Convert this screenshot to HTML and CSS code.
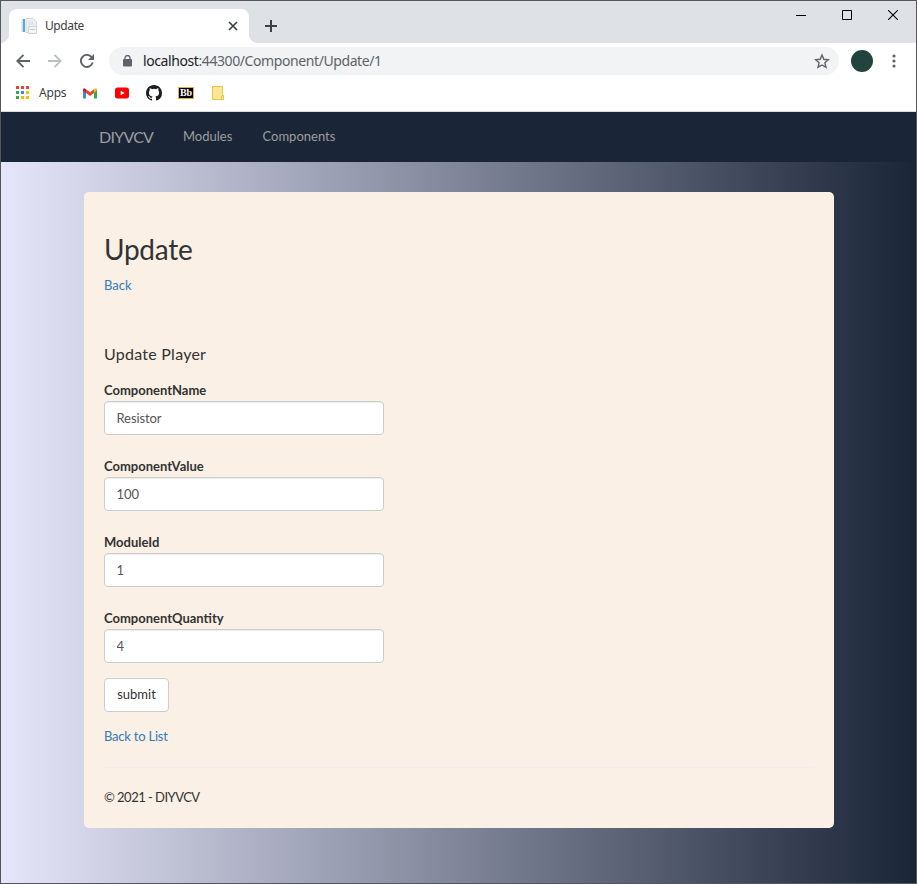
FILE: index.html
```html
<!DOCTYPE html>
<html lang="en">
<head>
<meta charset="utf-8">
<title>Update</title>
<link rel="stylesheet" href="styles.css">
</head>
<body>
<div class="window">
  <header class="tabstrip">
    <div class="tab">
      <svg class="favicon" width="16" height="16" viewBox="0 0 16 16"><path d="M5 .5h7l3.500 3v11H5z" fill="#eef2f6" stroke="#d3d7db"/><path d="M.5 1h3v13h-3z" fill="#c3e0f1"/><path d="M2 1h2v13H2z" fill="#5fa6d0"/><path d="M7 4h5M7 6h6" stroke="#d0dce5"/><path d="M7.500 8.500h8v7h-8z" fill="#f4f5f6" stroke="#cdd0d4"/><path d="M9 11.500h5" stroke="#c3c8cd"/></svg>
      <span class="tab-title">Update</span>
      <svg class="tab-close" width="10" height="10" viewBox="0 0 10 10"><path d="M1 1l8 8M9 1L1 9" stroke="#3c4043" stroke-width="1.700"/></svg>
    </div>
    <svg class="new-tab" width="12" height="12" viewBox="0 0 12 12"><path d="M6 0v12M0 6h12" stroke="#3c4043" stroke-width="2"/></svg>
    <div class="controls">
      <svg width="10" height="10" viewBox="0 0 10 10"><path d="M0 5.500h10" stroke="#000"/></svg>
      <svg width="10" height="10" viewBox="0 0 10 10"><path d="M.5.5h9v9h-9z" fill="none" stroke="#000"/></svg>
      <svg width="10" height="10" viewBox="0 0 10 10"><path d="M0 0l10 10M10 0L0 10" stroke="#000" stroke-width="1.100"/></svg>
    </div>
  </header>
  <div class="toolbar">
    <svg class="nav-icon" width="14" height="14" viewBox="0 0 14 14"><path d="M14 7H1.500M7.500.8L1.300 7l6.200 6.200" fill="none" stroke="#5f6368" stroke-width="1.900"/></svg>
    <svg class="nav-icon" width="14" height="14" viewBox="0 0 14 14"><path d="M0 7h12.500M6.500.8L12.700 7l-6.200 6.200" fill="none" stroke="#bdbfc1" stroke-width="1.900"/></svg>
    <svg class="nav-icon" width="14" height="14" viewBox="0 0 14 14"><path d="M12.700 8.500A6 6 0 1 1 11.300 2.800l1.200 1.300" fill="none" stroke="#5f6368" stroke-width="1.900"/><path d="M14 0v6H8z" fill="#5f6368"/></svg>
    <div class="omnibox">
      <svg class="lock" width="9" height="12" viewBox="0 0 9 12"><path d="M2 5V3a2.500 2.500 0 0 1 5 0v2" fill="none" stroke="#5f6368" stroke-width="1.300"/><rect y="4" width="9" height="7.500" rx="1" fill="#5f6368"/></svg>
      <span class="url"><b>localhost</b>:44300/Component/Update/1</span>
      <svg class="star" width="16" height="16" viewBox="0 0 16 16"><path d="M8 2l1.800 4.300 4.700.4-3.600 3.100 1.100 4.600L8 12l-4 2.400 1.100-4.600-3.600-3.100 4.700-.4z" fill="none" stroke="#5f6368" stroke-width="1.400"/></svg>
    </div>
    <span class="avatar"></span>
    <svg class="more" width="4" height="14" viewBox="0 0 4 14" fill="#5f6368"><circle cx="2" cy="2" r="1.600"/><circle cx="2" cy="7" r="1.600"/><circle cx="2" cy="12" r="1.600"/></svg>
  </div>
  <div class="bookmarks">
    <svg class="apps" width="13" height="13" viewBox="0 0 13 13"><path d="M0 0h3v3H0zM5 0h3v3H5zM10 0h3v3h-3z" fill="#ea4335"/><path d="M0 5h3v3H0zM0 10h3v3H0z" fill="#34a853"/><path d="M5 5h3v3H5z" fill="#4285f4"/><path d="M10 5h3v3h-3zM5 10h3v3H5zM10 10h3v3h-3z" fill="#fbbc04"/></svg>
    <span class="apps-label">Apps</span>
    <svg width="16" height="16" viewBox="0 0 16 16"><path d="M1 4v9q0 .5.500.5h2.500V6z" fill="#4285f4"/><path d="M15 4v9q0 .5-.5.5H12V6z" fill="#34a853"/><path d="M12 4.500l1-1q2-1 2 1.500L12 8z" fill="#fbbc04"/><path d="M1 5q0-2.500 2-1.500L4 4.500V8L1 5.800z" fill="#c5221f"/><path d="M4 4.300L8 7.300l4-3V8l-4 3-4-3z" fill="#ea4335"/></svg>
    <svg width="16" height="16" viewBox="0 0 16 16"><rect x="1" y="2.500" width="14" height="11" rx="2.500" fill="#f00"/><path d="M6.700 5.700v4.600l4-2.300z" fill="#fff"/></svg>
    <svg width="16" height="16" viewBox="0 0 16 16"><path fill="#1b1f23" d="M8 0C3.580 0 0 3.580 0 8c0 3.540 2.290 6.530 5.470 7.590.4.070.55-.17.55-.38 0-.19-.01-.82-.01-1.490-2.010.37-2.530-.49-2.690-.94-.09-.23-.48-.94-.82-1.130-.28-.15-.68-.52-.01-.53.63-.01 1.080.58 1.230.82.72 1.210 1.870.87 2.330.66.07-.52.280-.87.510-1.070-1.780-.2-3.640-.89-3.640-3.950 0-.87.310-1.590.820-2.150-.08-.2-.36-1.020.080-2.120 0 0 .67-.21 2.200.820a7.500 7.500 0 0 1 4 0c1.530-1.040 2.200-.82 2.200-.82.440 1.100.160 1.920.080 2.120.510.560.820 1.270.820 2.150 0 3.070-1.870 3.750-3.650 3.950.290.250.540.730.540 1.480 0 1.070-.01 1.930-.01 2.200 0 .210.150.460.550.380A8.010 8.010 0 0 0 16 8c0-4.420-3.580-8-8-8z"/></svg>
    <span class="bb">Bb</span>
    <svg width="16" height="16" viewBox="0 0 16 16"><path d="M2.500 1.500h10v9h1v4h-11z" fill="#ffe694" stroke="#e8c44c"/><path d="M11.500 14.500v-4h2" fill="none" stroke="#e8c44c"/></svg>
  </div>
  <nav class="navbar">
    <a class="brand">DIYVCV</a>
    <a class="link-modules">Modules</a>
    <a class="link-components">Components</a>
  </nav>
  <main class="page">
    <section class="card">
      <h1>Update</h1>
      <a class="back">Back</a>
      <h2>Update Player</h2>
      <form>
        <label for="name">ComponentName</label>
        <input id="name" value="Resistor">
        <label for="value">ComponentValue</label>
        <input id="value" value="100">
        <label for="module">ModuleId</label>
        <input id="module" value="1">
        <label for="quantity">ComponentQuantity</label>
        <input id="quantity" value="4">
        <button type="button">submit</button>
      </form>
      <a class="list">Back to List</a>
      <hr>
      <footer>© 2021 - DIYVCV</footer>
    </section>
  </main>
</div>
</body>
</html>
```
FILE: styles.css
```css
* { box-sizing: border-box; }
body { margin: 0; font-family: Lato, "Liberation Sans", sans-serif; font-size: 13px; color: #333; }
svg { display: block; flex: none; }
.window { width: 917px; height: 884px; border: 1px solid #55565a; display: flex; flex-direction: column; overflow: hidden; background: #fff; }
.tabstrip { height: 42px; flex: none; background: #dee1e6; display: flex; align-items: flex-start; padding-left: 8px; font-family: "Noto Sans", sans-serif; }
.tab { position: relative; width: 240px; height: 34px; margin-top: 8px; padding: 0 11px 0 12px; background: #fff; border-radius: 8px 8px 0 0; display: flex; align-items: center; }
.tab::before, .tab::after { content: ""; position: absolute; bottom: 0; width: 8px; height: 8px; }
.tab::before { left: -8px; background: radial-gradient(circle at 0 0, transparent 7.5px, #fff 8px); }
.tab::after { right: -8px; background: radial-gradient(circle at 100% 0, transparent 7.5px, #fff 8px); }
.tab-title { margin: -2px 0 0 8px; font-size: 12px; letter-spacing: -.4px; color: #3c4043; }
.tab-close { margin-left: auto; }
.new-tab { margin: 19px 0 0 16px; }
.controls { display: flex; gap: 36px; margin: 9px 18px 0 auto; }
.toolbar { height: 36px; flex: none; display: flex; align-items: center; padding: 0 20px 0 15px; }
.nav-icon { margin-right: 18px; }
.omnibox { width: 730px; height: 28px; margin-left: -3px; border-radius: 14px; background: #f1f3f4; display: flex; align-items: center; padding: 0 9px 0 14px; }
.lock { margin-top: -1px; }
.url { margin: -1px 0 0 11px; font: 14px "Noto Sans", sans-serif; letter-spacing: -.41px; color: #5f6368; }
.url b { font-weight: 400; color: #202124; }
.star { margin-left: auto; }
.avatar { width: 22px; height: 22px; border-radius: 50%; background: #22443e; margin-left: 12px; }
.more { margin-left: auto; }
.bookmarks { height: 33px; flex: none; display: flex; align-items: center; gap: 16px; padding: 0 0 5px 15px; border-bottom: 1px solid #d8dadd; font-family: "Noto Sans", sans-serif; }
.apps-label { width: 27px; margin-left: -6px; font-size: 12px; letter-spacing: -.2px; color: #3c4043; }
.bb { width: 16px; height: 12px; background: #000; border: 1px solid #e5a84b; color: #fff; font: bold 10px/10px "Liberation Serif", serif; text-align: center; }
.navbar { height: 50px; flex: none; background: #1a2537; color: #9d9d9d; display: flex; align-items: center; padding: 0 0 2px 98px; }
.brand { width: 84px; font-size: 16px; letter-spacing: -.75px; }
.link-modules { width: 79.500px; }
.page { flex: 1; padding: 30px 0 0 83px; background: linear-gradient(to right, #e6e6fa, #1a2537); }
.card { width: 750px; height: 636px; padding: 38px 20px 0; background: #faf0e6; border-radius: 5px; display: flex; flex-direction: column; }
h1 { margin: 0; font-size: 28px; line-height: 38px; font-weight: 400; letter-spacing: -.25px; }
.back, .list { color: #337ab7; line-height: 20px; }
.back { margin-top: 7px; }
h2 { margin: 48px 0 0; font-size: 16px; line-height: 22px; font-weight: 400; letter-spacing: .25px; }
form { display: flex; flex-direction: column; align-items: flex-start; margin-top: 15px; }
label { height: 20px; line-height: 20px; font-weight: 700; }
input { width: 280px; height: 34px; margin: 1px 0 21px; padding: 0 12px 0 11.500px; border: 1px solid #ccc; border-radius: 4px; background: #fff; box-shadow: inset 0 1px 1px rgba(0,0,0,.075); font: 13px Lato, sans-serif; letter-spacing: -.1px; color: #555; }
button { width: 65px; height: 34px; margin-top: -6px; padding: 0 0 2px; border: 1px solid #ccc; border-radius: 4px; background: #fff; font: 13px Lato, sans-serif; color: #333; }
.list { margin-top: 14px; letter-spacing: -.22px; }
hr { width: 100%; margin: 21px 0 19px; border: 0; border-top: 1px solid #eee; }
footer { line-height: 20px; letter-spacing: -.52px; }
```
